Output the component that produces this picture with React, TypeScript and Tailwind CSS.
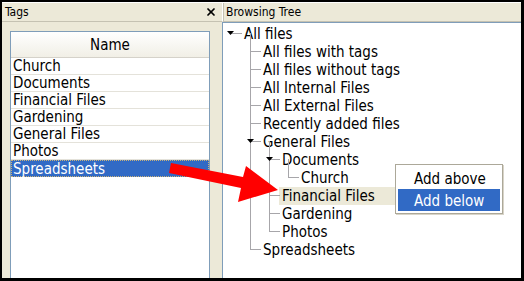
import React from 'react';
import { X } from 'lucide-react';

const ui = "font-['DejaVu_Sans_Condensed','Liberation_Sans',sans-serif]";

const tags = ['Church', 'Documents', 'Financial Files', 'Gardening', 'General Files', 'Photos', 'Spreadsheets'];

const indent: Record<number, string> = {
  0: 'pl-[21px]',
  1: 'pl-[40px]',
  2: 'pl-[59px]',
  3: 'pl-[78px]',
};

const tree = [
  { label: 'All files', level: 0 },
  { label: 'All files with tags', level: 1 },
  { label: 'All files without tags', level: 1 },
  { label: 'All Internal Files', level: 1 },
  { label: 'All External Files', level: 1 },
  { label: 'Recently added files', level: 1 },
  { label: 'General Files', level: 1 },
  { label: 'Documents', level: 2 },
  { label: 'Church', level: 3 },
  { label: 'Financial Files', level: 2, hover: true },
  { label: 'Gardening', level: 2 },
  { label: 'Photos', level: 2 },
  { label: 'Spreadsheets', level: 1 },
];

const cy = (i: number) => 10 + 18 * i;
const vx = (level: number) => 27 + 19 * (level - 1);
const tx = (level: number) => 21 + 19 * level;

// tree guide lines and expander triangles
const TreeLines = () => {
  const lines: React.ReactNode[] = [];
  tree.forEach((n, i) => {
    if (n.level > 0) {
      lines.push(<line key={'h' + i} x1={vx(n.level)} y1={cy(i) + 0.5} x2={tx(n.level) - 2} y2={cy(i) + 0.5} />);
    }
  });
  return (
    <svg className="absolute inset-0 pointer-events-none" width="298" height="256">
      <g stroke="#a7a6aa" strokeWidth="1" shapeRendering="crispEdges">
        <line x1={7} y1={cy(0) + 0.5} x2={19} y2={cy(0) + 0.5} />
        <line x1={vx(1) + 0.5} y1={cy(0)} x2={vx(1) + 0.5} y2={cy(12)} />
        <line x1={vx(2) + 0.5} y1={cy(6)} x2={vx(2) + 0.5} y2={cy(11)} />
        <line x1={vx(3) + 0.5} y1={cy(7)} x2={vx(3) + 0.5} y2={cy(8)} />
        {lines}
      </g>
      <g fill="#000">
        <path d={`M4 ${cy(0) - 2} h7 l-3.5 4 z`} />
        <path d={`M${vx(1) - 3} ${cy(6) - 2} h7 l-3.5 4 z`} />
        <path d={`M${vx(2) - 3} ${cy(7) - 2} h7 l-3.5 4 z`} />
      </g>
    </svg>
  );
};

export default function App() {
  return (
    <div className={`relative w-[524px] h-[281px] bg-black pt-[2px] pl-[2px] pr-[3px] pb-[3px] ${ui}`}>
      <div className="flex h-full bg-[#ece9d8]">
        {/* Tags panel */}
        <div className="w-[220px] flex flex-col">
          <div className="h-[20px] flex items-center justify-between pl-[3px] pr-[5px] border-t border-white border-b border-b-[#c5c2b2]">
            <span className="text-[12px] leading-[14px] text-black">Tags</span>
            <X size={12} strokeWidth={3.5} className="text-black" />
          </div>
          <div className="mt-[9px] ml-[8px] w-[200px] flex-1 border border-b-0 border-[#7f9db9] bg-white flex flex-col text-[15px] leading-[17px]">
            <div className="h-[26px] shrink-0 flex items-center justify-center pt-[2px] border-b border-[#d5d2ca] bg-gradient-to-b from-white to-[#f1efe6] text-black">
              Name
            </div>
            {tags.map((t) =>
              t === 'Spreadsheets' ? (
                <div
                  key={t}
                  className="h-[17px] shrink-0 flex items-center pl-[1px] pt-[1px] bg-[#316ac5] text-white border border-dotted border-[#c9b27a]"
                >
                  {t}
                </div>
              ) : (
                <div key={t} className="h-[17px] shrink-0 flex items-center pl-[2px] pt-[1px] text-black border-b border-[#e4e2da]">
                  {t}
                </div>
              )
            )}
          </div>
        </div>

        {/* Browsing tree panel */}
        <div className="flex-1 flex flex-col">
          <div className="h-[20px] flex items-center pl-[3px] border-t border-l border-white border-b border-b-[#c5c2b2] shadow-[inset_1px_0_0_#c5c2b2]">
            <span className="text-[12px] leading-[14px] text-black">Browsing Tree</span>
          </div>
          <div className="relative flex-1 border-l border-t border-[#7f9db9] bg-white pt-[1px] text-[15px] leading-[18px]">
            <TreeLines />
            {tree.map((n) => (
              <div key={n.label + n.level} className={`h-[18px] flex items-center pt-[1px] text-black ${indent[n.level]}`}>
                {n.hover ? (
                  <span className="-ml-[3px] pl-[3px] w-[170px] h-[18px] flex items-center bg-[#ece9d8]">{n.label}</span>
                ) : (
                  <span>{n.label}</span>
                )}
              </div>
            ))}

            {/* context menu */}
            <div className="absolute left-[172px] top-[141px] w-[108px] border border-[#aca899] bg-white p-[2px] shadow-[1px_1px_0_#d8d4c8]">
              <div className="h-[22px] flex items-center pl-[16px] pt-[2px] text-black">Add above</div>
              <div className="h-[22px] flex items-center pl-[16px] pt-[2px] bg-[#316ac5] text-white">Add below</div>
            </div>
          </div>
        </div>
      </div>

      {/* red annotation arrow */}
      <svg className="absolute inset-0 pointer-events-none" width="524" height="281">
        <polygon fill="#ff0000" points="171,163 243,177 246,166 278,190 238,202 241,188 169,173" />
      </svg>
    </div>
  );
}
